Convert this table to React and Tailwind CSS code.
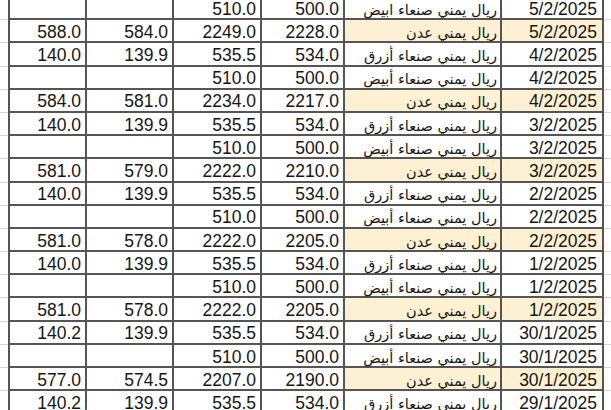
import React from 'react'

const W = 'ريال يمني صنعاء أبيض'
const A = 'ريال يمني عدن'
const Z = 'ريال يمني صنعاء أزرق'

const rows = [
    ['', '', '510.0', '500.0', 'ريال يمني صنعاء ابيض', '5/2/2025', false],
    ['588.0', '584.0', '2249.0', '2228.0', A, '5/2/2025', true],
    ['140.0', '139.9', '535.5', '534.0', Z, '4/2/2025', false],
    ['', '', '510.0', '500.0', W, '4/2/2025', false],
    ['584.0', '581.0', '2234.0', '2217.0', A, '4/2/2025', true],
    ['140.0', '139.9', '535.5', '534.0', Z, '3/2/2025', false],
    ['', '', '510.0', '500.0', W, '3/2/2025', false],
    ['581.0', '579.0', '2222.0', '2210.0', A, '3/2/2025', true],
    ['140.0', '139.9', '535.5', '534.0', Z, '2/2/2025', false],
    ['', '', '510.0', '500.0', W, '2/2/2025', false],
    ['581.0', '578.0', '2222.0', '2205.0', A, '2/2/2025', true],
    ['140.0', '139.9', '535.5', '534.0', Z, '1/2/2025', false],
    ['', '', '510.0', '500.0', W, '1/2/2025', false],
    ['581.0', '578.0', '2222.0', '2205.0', A, '1/2/2025', true],
    ['140.2', '139.9', '535.5', '534.0', Z, '30/1/2025', false],
    ['', '', '510.0', '500.0', W, '30/1/2025', false],
    ['577.0', '574.5', '2207.0', '2190.0', A, '30/1/2025', true],
    ['140.2', '139.9', '535.5', '534.0', Z, '29/1/2025', false],
]

function Num({ w, children }) {
    return (
        <div className={`${w} shrink-0 h-full flex items-end justify-end pr-[4px] border-r-2 border-b-2 border-[#555]`}>
            <span className="leading-none">{children}</span>
        </div>
    )
}

export default function App() {
    return (
        <div className="w-[611px] h-[410px] overflow-hidden bg-white text-[#161616] text-[17.5px] font-['Liberation_Sans',Arial,sans-serif]">
            <div className="-mt-[3px]">
                {rows.map((r, i) => (
                    <div key={i} className="flex h-[23.2px]">
                        <div className="w-[8px] shrink-0 border-b border-[#d4d4d4]" />
                        <div className="flex h-full border-l-2 border-[#555]">
                            <Num w="w-[77px]">{r[0]}</Num>
                            <Num w="w-[87px]">{r[1]}</Num>
                            <Num w="w-[88px]">{r[2]}</Num>
                            <Num w="w-[83px]">{r[3]}</Num>
                            <div className={`w-[157px] shrink-0 h-full flex items-end justify-end pr-[3px] pb-[1px] border-r-2 border-b-2 border-[#555] ${r[6] ? 'bg-[#fdf0d3]' : ''}`}>
                                <span dir="rtl" className="leading-none text-[14.5px] font-['DejaVu_Sans',sans-serif]">{r[4]}</span>
                            </div>
                            <div className={`w-[102px] shrink-0 h-full flex items-end justify-end pr-[5px] border-r-2 border-b-2 border-[#555] ${r[6] ? 'bg-[#fdf0d3]' : ''}`}>
                                <span className="leading-none">{r[5]}</span>
                            </div>
                        </div>
                        <div className="flex-1 border-b border-[#d4d4d4]" />
                    </div>
                ))}
            </div>
        </div>
    )
}
